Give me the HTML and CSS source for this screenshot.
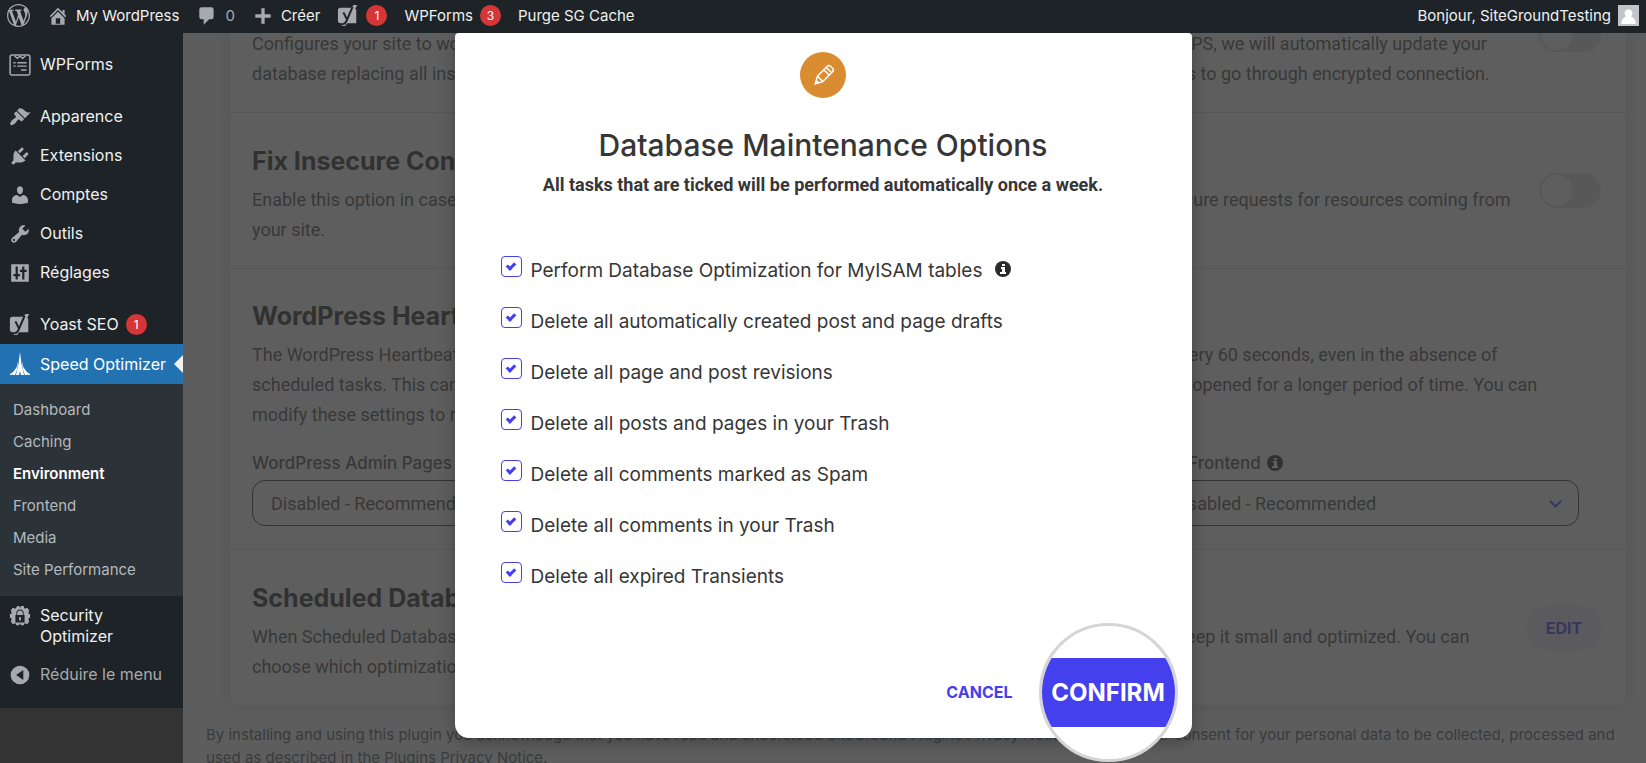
FILE: index.html
```html
<!DOCTYPE html>
<html lang="fr">
<head>
<meta charset="utf-8">
<title>Speed Optimizer – Environment</title>
<link rel="stylesheet" href="styles.css">
</head>
<body>
<svg class="defs" aria-hidden="true">
  <symbol id="i-yoast" viewBox="0 0 24 24"><path fill-rule="evenodd" d="M4 3h12l2-3h4l-2 4a3 3 0 0 1 1 2v14H11l-2 3H5l2-3H4a3 3 0 0 1-3-3V6a3 3 0 0 1 3-3z"/><path d="M7 8l4 8 6-14M11 16q-2 5-5 5" fill="none" stroke="#1d2327" stroke-width="2.2"/></symbol>
  <symbol id="i-info" viewBox="0 0 16 16"><circle cx="8" cy="8" r="8"/><path fill="#fff" d="M7 3h3v2H7zM6 6h4v5h1v2H5v-2h2V8H6z"/></symbol>
</svg>
<header class="adminbar">
  <a href="#" class="bar-item" aria-label="WordPress"><svg class="ico wp" viewBox="0 0 20 20"><path d="M20 10c0-5.51-4.49-10-10-10C4.48 0 0 4.49 0 10c0 5.52 4.48 10 10 10 5.51 0 10-4.48 10-10zM7.78 15.37L4.37 6.22c.55-.02 1.17-.08 1.17-.08.5-.06.44-1.13-.06-1.11 0 0-1.45.11-2.37.11-.18 0-.37 0-.58-.01C4.12 2.69 6.87 1.11 10 1.11c2.33 0 4.45.87 6.05 2.34-.68-.11-1.65.39-1.65 1.58 0 .74.45 1.36.9 2.1.35.61.55 1.36.55 2.46 0 1.49-1.4 5-1.4 5l-3.03-8.37c.54-.02.82-.17.82-.17.5-.05.44-1.25-.06-1.22 0 0-1.44.12-2.38.12-.87 0-2.33-.12-2.33-.12-.5-.03-.56 1.2-.06 1.22l.92.08 1.26 3.41zM17.41 10c.24-.64.74-1.87.43-4.25.7 1.29 1.05 2.71 1.05 4.25 0 3.29-1.73 6.24-4.4 7.78.97-2.59 1.94-5.2 2.92-7.78zM6.1 18.09C3.12 16.65 1.11 13.53 1.11 10c0-1.3.23-2.48.72-3.59C3.25 10.3 4.67 14.2 6.1 18.09zm4.03-6.63l2.58 6.98c-.86.29-1.76.45-2.71.45-.79 0-1.57-.11-2.29-.33.81-2.38 1.62-4.74 2.42-7.1z"/></svg></a>
  <a href="#" class="bar-item"><svg class="ico" viewBox="0 0 20 20"><path d="M16 8.5l1.53 1.53-1.06 1.06L10 4.6l-6.47 6.49-1.06-1.06L10 2.5l4 4v-2h2v4zm-6-2.46l6 5.99V18H4v-5.97zM12 17v-5H8v5h4z"/></svg><span>My WordPress</span></a>
  <a href="#" class="bar-item comments"><svg class="ico" viewBox="0 0 20 20"><path d="M5 2h9q2 0 2 2v7q0 2-2 2h-2l-5 5v-5H5q-2 0-2-2V4q0-2 2-2z"/></svg><span class="muted">0</span></a>
  <a href="#" class="bar-item"><svg class="ico" viewBox="0 0 20 20"><path d="M17 8.500v3h-5.500V17h-3v-5.500H3v-3h5.500V3h3v5.500z"/></svg><span>Créer</span></a>
  <a href="#" class="bar-item" aria-label="Yoast SEO"><svg class="ico"><use href="#i-yoast"/></svg><span class="badge">1</span></a>
  <a href="#" class="bar-item"><span>WPForms</span><span class="badge">3</span></a>
  <a href="#" class="bar-item"><span>Purge SG Cache</span></a>
  <a href="#" class="bar-item account"><span>Bonjour, SiteGroundTesting</span><svg class="avatar" viewBox="0 0 20 20"><path fill="#c3c4c7" d="M0 0h20v20H0z"/><path fill="#fff" d="M10 4a4 4 0 0 1 2.500 7Q17 13 17 18H3q0-5 4.500-7A4 4 0 0 1 10 4z"/></svg></a>
</header>
<div class="shell">
  <aside class="sidebar">
    <nav class="menu">
      <a href="#" class="menu-item gap"><svg class="ico" viewBox="0 0 20 20"><rect x="1" y="1" width="18" height="18" rx="1.500" fill="none" stroke="currentColor" stroke-width="1.400"/><path d="M5 1.500L7.500 4 10 2l2.500 2L15 1.500M4 8h2m1.500 0H16M4 11h2m1.500 0H16M11 14.500h5" fill="none" stroke="currentColor" stroke-width="1.300"/></svg><span>WPForms</span></a>
      <a href="#" class="menu-item"><svg class="ico" viewBox="0 0 20 20"><path d="M14.480 11.060L7.410 3.990l1.500-1.500c.5-.56 2.300-.47 3.510.32 1.210.8 1.430 1.280 2.910 2.100 1.180.64 2.450 1.260 4.450.85zm-.71.71L6.700 4.700 4.930 6.470c-.39.39-.39 1.020 0 1.410l1.060 1.060c.39.39.39 1.030 0 1.420-.6.6-1.430 1.110-2.210 1.690-.35.26-.7.530-1.010.840C1.430 14.230.4 16.080 1.400 17.070c.99 1 2.840-.03 4.180-1.360.31-.31.580-.66.850-1.020.57-.78 1.080-1.610 1.690-2.210.39-.39 1.020-.39 1.410 0l1.060 1.060c.39.39 1.020.39 1.410 0z"/></svg><span>Apparence</span></a>
      <a href="#" class="menu-item"><svg class="ico" viewBox="0 0 20 20"><path d="M13.110 4.360L9.870 7.600 8 5.730l3.240-3.240c.35-.34 1.050-.2 1.560.32.520.51.660 1.210.31 1.550zm-8 1.770l.91-1.120 9.010 9.010-1.190.84c-.71.71-2.630 1.160-3.820 1.160H6.140L4.900 17.260c-.59.59-1.540.59-2.120 0-.59-.58-.59-1.530 0-2.120l1.240-1.240v-3.880c0-1.130.4-3.190 1.090-3.890zm7.260 3.970l3.240-3.240c.34-.35 1.040-.21 1.550.31.520.51.660 1.210.31 1.550l-3.240 3.250z"/></svg><span>Extensions</span></a>
      <a href="#" class="menu-item"><svg class="ico" viewBox="0 0 20 20"><path d="M10 9.250c-2.270 0-2.730-3.440-2.730-3.440C7 4.020 7.820 2 9.970 2c2.160 0 2.980 2.020 2.710 3.810 0 0-.41 3.440-2.680 3.440zm0 2.570L12.720 10c2.390 0 4.520 2.330 4.520 4.530v2.490s-3.650 1.130-7.240 1.130c-3.650 0-7.240-1.130-7.240-1.130v-2.490c0-2.250 1.940-4.480 4.470-4.480z"/></svg><span>Comptes</span></a>
      <a href="#" class="menu-item"><svg class="ico" viewBox="0 0 20 20"><path d="M16.680 9.770c-1.340 1.340-3.300 1.670-4.950.99l-5.410 6.520c-.99.99-2.590.99-3.580 0s-.99-2.590 0-3.570l6.520-5.420c-.68-1.650-.35-3.610.99-4.950 1.280-1.280 3.120-1.620 4.720-1.060l-2.890 2.890 2.820 2.820 2.860-2.870c.53 1.580.18 3.390-1.080 4.650zM3.810 16.210c.4.390 1.040.39 1.430 0 .4-.4.400-1.040 0-1.430-.39-.4-1.030-.4-1.430 0-.39.39-.39 1.030 0 1.430z"/></svg><span>Outils</span></a>
      <a href="#" class="menu-item gap"><svg class="ico" viewBox="0 0 20 20"><path fill-rule="evenodd" d="M2 2h16v16H2zM6 4v7H4v2h2v3h2v-3h2v-2H8V4zm6 0v3h-2v2h2v7h2V9h2V7h-2V4z"/></svg><span>Réglages</span></a>
      <a href="#" class="menu-item"><svg class="ico"><use href="#i-yoast"/></svg><span>Yoast SEO</span><span class="badge">1</span></a>
      <a href="#" class="menu-item current"><svg class="ico" viewBox="0 0 20 24"><path d="M10 0q1 12 4 23h-3l-1-4-1 4H6Q9 12 10 0z"/><path d="M8 9q-1 8-5 12l-1 2h3Q8 17 8 9zM12 9q1 8 5 12l1 2h-3Q12 17 12 9zM6 16q-2 4-6 6v1h1q4-2 5-7zM14 16q2 4 6 6v1h-1q-4-2-5-7z"/></svg><span>Speed Optimizer</span></a>
    </nav>
    <nav class="submenu">
      <a href="#">Dashboard</a><a href="#">Caching</a><a href="#" class="on">Environment</a><a href="#">Frontend</a><a href="#">Media</a><a href="#">Site Performance</a>
    </nav>
    <nav class="menu tail">
      <a href="#" class="menu-item tall"><svg class="ico big" viewBox="0 0 24 24"><path d="M9 1h2l1 2 1-2h3l1 3 3-1 2 3-1 3 2 1v4l-2 1 1 3-2 3-3-1-1 2h-3l-1-2-1 2H8l-1-2-3 1-2-3 1-3-2-1v-4l2-1-1-3 2-3 3 1z"/><path fill="#1d2327" d="M7 11h1V9a4 4 0 0 1 8 0v2h1v8H7zm2 0h6V9a3 3 0 0 0-6 0z"/><path d="M9.500 11V9a2.500 2.500 0 0 1 5 0v2zM11 13h2v4h-2z"/></svg><span>Security<br>Optimizer</span></a>
      <button type="button" class="menu-item collapse"><svg class="ico" viewBox="0 0 20 20"><circle cx="10" cy="10" r="8.500"/><path fill="#1d2327" d="M13 5.500v9L6.500 10z"/></svg><span>Réduire le menu</span></button>
    </nav>
  </aside>
  <main class="page">
    <div class="card">
      <section class="row first">
        <div class="copy"><p>Configures your site to work correctly via HTTPS and forces a secure connection to your site. In order to force the HTTPS, we will automatically update your<br>database replacing all insecure links. In addition to that, we will add a rule in your .htaccess file, forcing all the requests to go through encrypted connection.</p></div>
        <input type="checkbox" class="switch" aria-label="HTTPS Enforce">
      </section>
      <section class="row">
        <div class="copy"><h2>Fix Insecure Content</h2><p>Enable this option in case you’re getting any insecure content errors on your website. We will dynamically rewrite insecure requests for resources coming from<br>your site.</p></div>
        <input type="checkbox" class="switch" aria-label="Fix Insecure Content">
      </section>
      <section class="row heart">
        <div class="copy"><h2>WordPress Heartbeat Optimization</h2><p>The WordPress Heartbeat API checks if scheduled tasks on your site should be executed. It runs in the background every 60 seconds, even in the absence of<br>scheduled tasks. This can cause high CPU usage if you leave your web browser with an active WordPress admin page opened for a longer period of time. You can<br>modify these settings to reduce server load.</p>
          <div class="fields">
            <div class="field"><label for="h1">WordPress Admin Pages</label><select id="h1"><option>Disabled - Recommended</option></select></div>
            <div class="field"><label for="h2">Posts and Pages</label><select id="h2"><option>120s - Recommended</option></select></div>
            <div class="field"><label for="h3">Site Frontend <svg class="info"><use href="#i-info"/></svg></label><select id="h3"><option>Disabled - Recommended</option></select></div>
          </div>
        </div>
      </section>
      <section class="row last">
        <div class="copy"><h2>Scheduled Database Maintenance</h2><p>When Scheduled Database Maintenance is enabled, we will automatically clean up all your database once a week to keep it small and optimized. You can<br>choose which optimizations to run below.</p></div>
        <button type="button" class="edit">EDIT</button>
      </section>
    </div>
    <p class="legal">By installing and using this plugin you acknowledge that you have read and understood <a href="#">SiteGround Plugins Privacy Notice</a> and give your consent for your personal data to be collected, processed and<br>used as described in the Plugins Privacy Notice.</p>
  </main>
</div>
<div class="overlay">
  <form class="dialog" role="dialog" aria-labelledby="dt">
    <span class="pencil"><svg viewBox="0 0 24 24"><g transform="rotate(45 12 12)"><path d="M8 3q0-3 2.500-3h3Q16 0 16 3v14l-4 7-4-7zM8 4h8M8 7.500h8M8 17h8"/><path class="tip" d="M10.500 21h3L12 24z"/></g></svg></span>
    <h1 id="dt">Database Maintenance Options</h1>
    <p class="lead">All tasks that are ticked will be performed automatically once a week.</p>
    <div class="tasks">
      <label><input type="checkbox" checked><span>Perform Database Optimization for MyISAM tables</span><svg class="info"><use href="#i-info"/></svg></label>
      <label><input type="checkbox" checked><span>Delete all automatically created post and page drafts</span></label>
      <label><input type="checkbox" checked><span>Delete all page and post revisions</span></label>
      <label><input type="checkbox" checked><span>Delete all posts and pages in your Trash</span></label>
      <label><input type="checkbox" checked><span>Delete all comments marked as Spam</span></label>
      <label><input type="checkbox" checked><span>Delete all comments in your Trash</span></label>
      <label><input type="checkbox" checked><span>Delete all expired Transients</span></label>
    </div>
    <div class="actions"><button type="button" class="cancel">CANCEL</button><span class="lens"><button type="button" class="confirm">CONFIRM</button></span></div>
  </form>
</div>
</body>
</html>
```
FILE: styles.css
```css
* { box-sizing: border-box; }
body { margin: 0; height: 100vh; overflow: hidden; background: #333; font-family: Inter, sans-serif; font-size: 15px; color: #f0f0f1; }
h1, h2, p { margin: 0; }
a { color: inherit; text-decoration: none; }
button { font: inherit; border: 0; background: none; padding: 0; color: inherit; }
.defs { position: absolute; width: 0; height: 0; }
.ico { width: 22px; height: 22px; flex: none; fill: #a7aaad; color: #a7aaad; }
.badge { display: grid; place-items: center; width: 21px; height: 21px; border-radius: 50%; background: #d63638; color: #fff; font-size: 12px; }

.adminbar { position: relative; z-index: 3; display: flex; align-items: flex-start; height: 33px; padding: 0 7px; background: #1d2327; gap: 17px; }
.bar-item { display: flex; align-items: center; gap: 7px; height: 31px; white-space: nowrap; }
.wp { width: 23px; height: 23px; }
.muted { color: #a7aaad; }
.account { margin-left: auto; }
.avatar { width: 21px; height: 21px; }

.shell { display: flex; height: calc(100vh - 33px); }
.sidebar { width: 183px; flex: none; position: relative; z-index: 2; background: #333; font-size: 16px; }
.menu { background: #1d2327; padding-top: 12px; }
.menu-item { display: flex; align-items: center; gap: 9px; width: 100%; min-height: 39px; padding: 0 9px; line-height: 21px; text-align: left; white-space: nowrap; }
.menu-item .badge { margin-left: -2px; }
.gap { margin-bottom: 13px; }
.current { position: relative; min-height: 40px; background: #2271b1; color: #fff; }
.current .ico { fill: #fff; height: 24px; }
.current::after { content: ""; position: absolute; right: 0; top: 11px; border: 9px solid transparent; border-right-color: #f0f0f1; border-left: 0; }
.submenu { display: grid; padding: 10px 13px; background: #2c3338; color: #b4b9be; font-size: 15px; }
.submenu a { line-height: 32px; height: 32px; }
.submenu .on { color: #fff; font-weight: 600; }
.tail { padding: 9px 0 14px; }
.tall { align-items: flex-start; min-height: 50px; }
.collapse { color: #a7aaad; }

.page { flex: 1; min-width: 0; overflow: hidden; padding: 0 20px 0 23px; background: #f0f0f1; font-family: Roboto, sans-serif; color: #4b4b4b; }
.card { margin: -76px 0 18px 24px; background: #f7f7f7; border-radius: 0 0 10px 10px; box-shadow: 0 2px 16px #0002; }
.row { display: flex; justify-content: space-between; align-items: center; height: 156px; padding: 0 25px 0 22px; border-bottom: 1px solid #dcdcdc; }
.row.heart { height: 281px; }
.row.last { height: 155px; border-bottom: 0; }
.copy { flex: 1; min-width: 0; padding-top: 6px; white-space: nowrap; font-size: 18px; line-height: 30px; }
.first .copy { padding-top: 48px; }
.copy h2 { font-family: Inter, sans-serif; font-size: 25px; line-height: 36px; font-weight: 700; color: #2b2b2b; margin-bottom: 6px; }
.switch { appearance: none; flex: none; width: 62px; height: 35px; margin: 0; border-radius: 18px; background: radial-gradient(circle at 18px 50%, #f7f7f7 15px, #dcdcdc 16px); }
.fields { display: grid; grid-template-columns: repeat(3, 1fr); gap: 24px; padding-right: 22px; margin-top: 18px; }
.field { position: relative; display: grid; gap: 2px; }
.field label { display: flex; align-items: center; gap: 6px; font-family: Inter, sans-serif; font-size: 17px; font-weight: 500; }
.field select { appearance: none; height: 46px; padding: 0 18px; border: 1px solid #333; border-radius: 13px; background: #f7f7f7; color: #4b4b4b; font: 18px Roboto, sans-serif; }
.field::after { content: ""; position: absolute; right: 19px; bottom: 20px; width: 7px; height: 7px; border: solid #4540ee; border-width: 0 2px 2px 0; rotate: 45deg; }
.info { width: 16px; height: 16px; fill: #2b2b2b; }
.edit { flex: none; width: 74px; height: 46px; border-radius: 23px; background: #e6e4f6; color: #4540ee; font: 700 16px Inter, sans-serif; }
.legal { font: 15px/23px Inter, sans-serif; white-space: nowrap; color: #50575e; }
.legal a { color: #2271b1; }

.overlay { position: absolute; z-index: 1; inset: 33px 0 0; display: flex; align-items: flex-start; justify-content: center; background: #333333c7; overflow: hidden; }
.dialog { width: 737px; padding: 19px 46px 0; border-radius: 4px 4px 14px 14px; background: #fff; color: #363636; text-align: center; box-shadow: 0 4px 16px #0004; }
.pencil { display: inline-grid; place-items: center; width: 46px; height: 46px; border-radius: 50%; background: #d98c30; }
.pencil svg { width: 23px; overflow: visible; fill: none; stroke: #fff; stroke-width: 1.5; }
.pencil .tip { fill: #fff; }
.dialog h1 { margin-top: 26px; font-size: 30px; line-height: 42px; font-weight: 500; }
.lead { margin-top: 5px; font: 700 18px/27px Roboto, sans-serif; }
.tasks { display: grid; gap: 21px; margin-top: 54px; }
.tasks label { display: flex; gap: 9px; height: 30px; font-size: 19px; line-height: 38px; text-align: left; }
.tasks input { appearance: none; flex: none; display: grid; place-items: center; width: 21px; height: 21px; margin: 4px 0 0; border: 1px solid #4540ee; border-radius: 4px; }
.tasks input::after { content: ""; width: 3px; height: 6px; border: solid #4540ee; border-width: 0 3px 3px 0; rotate: 45deg; margin-top: -3px; }
.tasks .info { margin: 9px 0 0 4px; }
.actions { display: flex; justify-content: flex-end; align-items: center; gap: 26px; height: 92px; margin-top: 58px; }
.cancel { color: #4540ee; font-weight: 700; font-size: 16px; }
.lens { display: grid; align-items: center; flex: none; width: 139px; height: 139px; border: 3px solid #d5d5d5; border-radius: 50%; overflow: hidden; background: #fff; margin-right: -32px; }
.confirm { height: 69px; background: #4540ee; color: #fff; font-weight: 700; font-size: 24px; }
```
